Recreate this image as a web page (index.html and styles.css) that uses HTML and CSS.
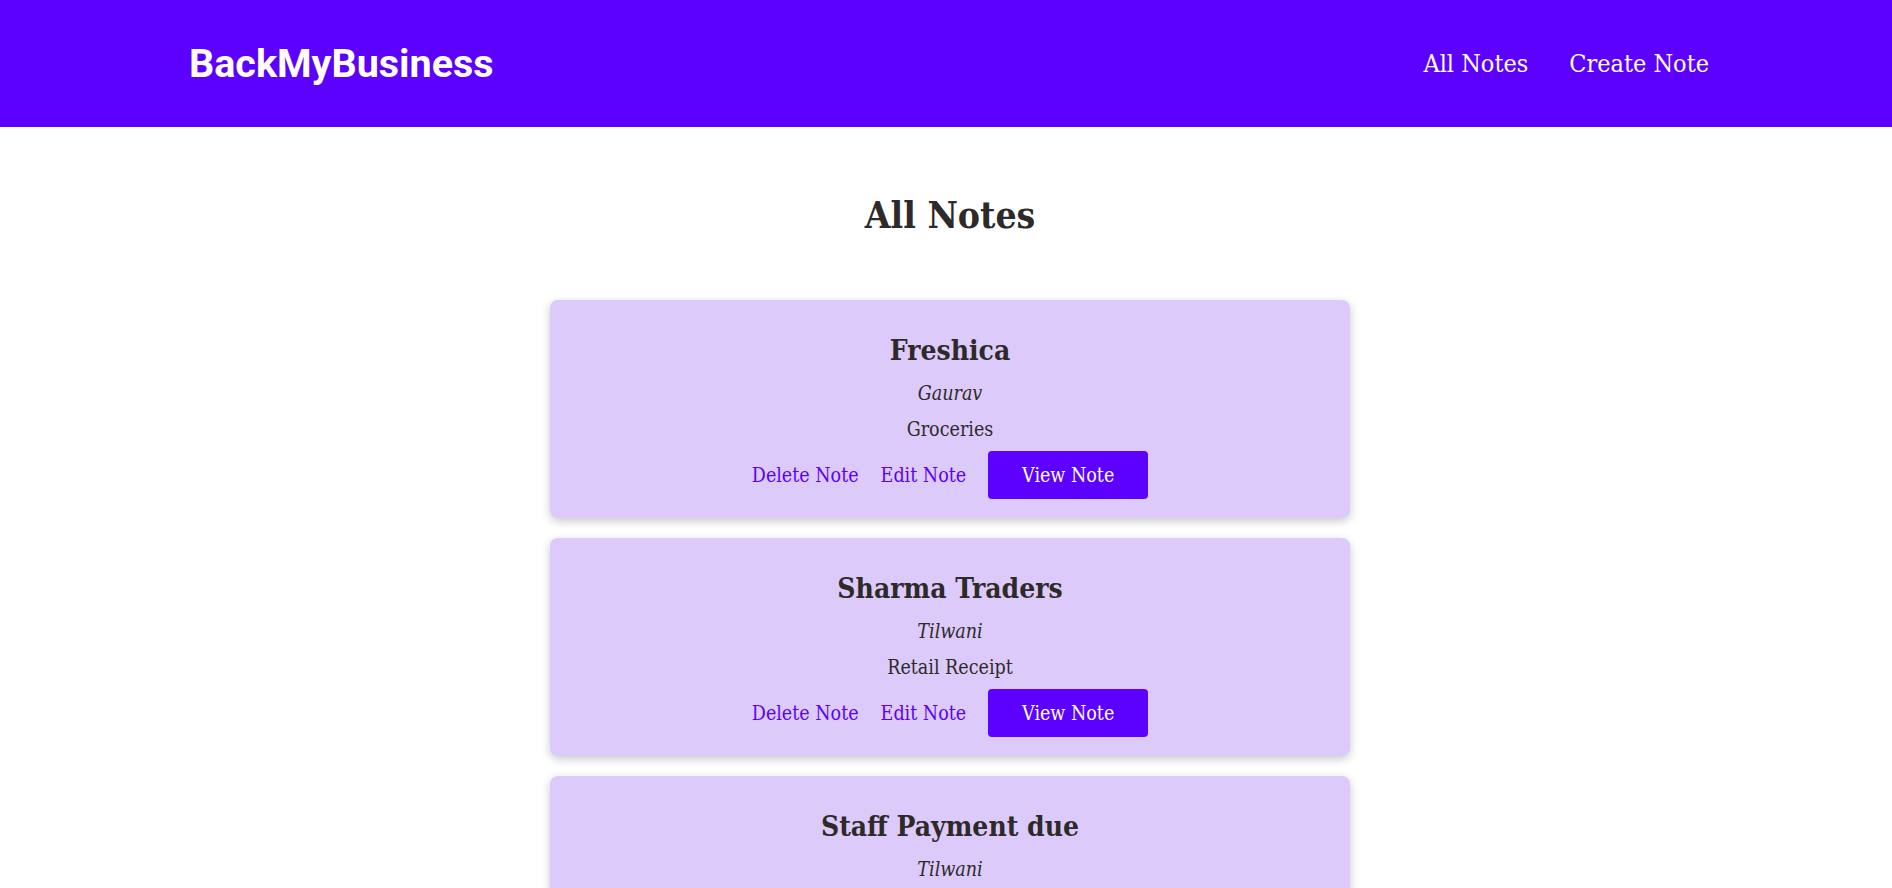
FILE: index.html
```html
<!DOCTYPE html>
<html lang="en">
<head>
<meta charset="utf-8">
<title>BackMyBusiness</title>
<link rel="stylesheet" href="styles.css">
</head>
<body>
<header class="topbar">
  <a class="brand" href="#">BackMyBusiness</a>
  <nav class="nav">
    <a href="#">All Notes</a>
    <a href="#">Create Note</a>
  </nav>
</header>
<main class="page">
  <h1 class="page-title">All Notes</h1>
  <section class="notes">
    <article class="note">
      <h2 class="note-title">Freshica</h2>
      <p class="note-author">Gaurav</p>
      <p class="note-category">Groceries</p>
      <div class="note-actions">
        <a class="link" href="#">Delete Note</a>
        <a class="link" href="#">Edit Note</a>
        <a class="btn" href="#">View Note</a>
      </div>
    </article>
    <article class="note">
      <h2 class="note-title">Sharma Traders</h2>
      <p class="note-author">Tilwani</p>
      <p class="note-category">Retail Receipt</p>
      <div class="note-actions">
        <a class="link" href="#">Delete Note</a>
        <a class="link" href="#">Edit Note</a>
        <a class="btn" href="#">View Note</a>
      </div>
    </article>
    <article class="note">
      <h2 class="note-title">Staff Payment due</h2>
      <p class="note-author">Tilwani</p>
      <p class="note-category">Salary</p>
      <div class="note-actions">
        <a class="link" href="#">Delete Note</a>
        <a class="link" href="#">Edit Note</a>
        <a class="btn" href="#">View Note</a>
      </div>
    </article>
  </section>
</main>
</body>
</html>
```

FILE: styles.css
```css
* { box-sizing: border-box; }

html, body {
  margin: 0;
  padding: 0;
  background: #ffffff;
}

body {
  font-family: "DejaVu Serif Condensed", "DejaVu Serif", serif;
  color: #2e2a2a;
}

a { text-decoration: none; }

.topbar {
  height: 127px;
  background: #5c00ff;
  display: flex;
  align-items: center;
  justify-content: space-between;
  padding: 0 183px 0 189px;
}

.brand {
  font-family: Roboto, "Liberation Sans", sans-serif;
  font-weight: 700;
  font-size: 39.5px;
  color: #ffffff;
}

.nav {
  display: flex;
  gap: 41px;
}

.nav a {
  color: #ffffff;
  font-size: 25px;
}

.page {
  padding: 0 0 40px 8px;
  display: flex;
  flex-direction: column;
  align-items: center;
}

.page-title {
  margin: 65px 0 62px;
  font-size: 37px;
  line-height: 46px;
  font-weight: 700;
  color: #2e2a2a;
}

.notes {
  display: flex;
  flex-direction: column;
  gap: 20px;
  width: 800px;
}

.note {
  background: #dccbfa;
  border-radius: 8px;
  box-shadow: 0 3px 10px rgba(0, 0, 0, 0.22);
  padding: 33px 20px 19px;
  display: flex;
  flex-direction: column;
  align-items: center;
  text-align: center;
}

.note-title {
  margin: 0 0 10px;
  font-size: 28px;
  line-height: 36px;
  font-weight: 700;
}

.note-author {
  margin: 0 0 6px;
  font-style: italic;
  font-size: 19.5px;
  line-height: 30px;
}

.note-category {
  margin: 0 0 6px;
  font-size: 19.5px;
  line-height: 30px;
}

.note-actions {
  display: flex;
  align-items: center;
  gap: 22px;
  height: 48px;
}

.link {
  color: #5c00ff;
  font-size: 19.5px;
}

.btn {
  display: flex;
  align-items: center;
  justify-content: center;
  width: 160px;
  height: 48px;
  background: #5c00ff;
  color: #ffffff;
  border-radius: 4px;
  font-size: 19.5px;
}
```
